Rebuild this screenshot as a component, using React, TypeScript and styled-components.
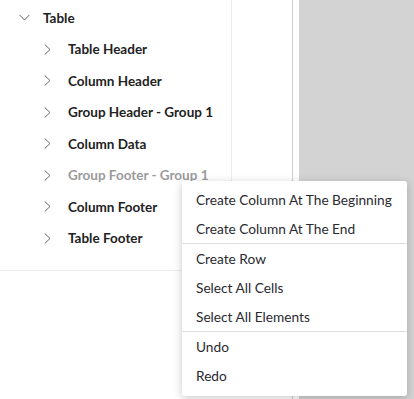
import React from "react";
import styled, { createGlobalStyle } from "styled-components";

const Global = createGlobalStyle`
  html, body { margin: 0; padding: 0; background: #fff; }
  body { font-family: "Lato", "Open Sans", sans-serif; }
  #root { width: 414px; height: 399px; overflow: hidden; }
`;

const Page = styled.div`
  display: flex;
  width: 414px;
  height: 399px;
  position: relative;
`;

const LeftPanel = styled.div`
  width: 292px;
  border-right: 1px solid #cfcfcf;
  display: flex;
  flex-direction: column;
  background: #fff;
`;

const TopArea = styled.div`
  display: flex;
  height: 270px;
  border-bottom: 1px solid #ebebeb;
`;

const TreeCol = styled.div`
  width: 231px;
  border-right: 1px solid #ececec;
  padding-top: 2px;
`;

const Gutter = styled.div`
  width: 6px;
  background: #fff;
`;

const Canvas = styled.div`
  flex: 1;
  background: #d3d3d3;
`;

const Row = styled.div<{ $level: number; $muted?: boolean }>`
  display: flex;
  align-items: center;
  height: 31.5px;
  padding-left: ${(p) => (p.$level === 0 ? 19 : 44)}px;
  font-size: 13.5px;
  font-weight: 700;
  color: ${(p) => (p.$muted ? "#9b9b9b" : "#222")};
`;

const Chevron = styled.span`
  display: inline-flex;
  width: 24px;
  align-items: center;
`;

const Menu = styled.div`
  position: absolute;
  left: 182px;
  top: 181px;
  width: 225px;
  padding: 4px 0 6px;
  background: #fff;
  border-radius: 3px;
  box-shadow: 0 2px 8px rgba(0, 0, 0, 0.22);
`;

const Item = styled.div`
  height: 29px;
  display: flex;
  align-items: center;
  padding-left: 14px;
  font-size: 13.7px;
  color: #2a2a30;
`;

const Divider = styled.div`
  height: 1px;
  background: #dddddd;
`;

const Down = () => (
  <svg width="11" height="7" viewBox="0 0 11 7" fill="none">
    <path d="M0.5 0.8 L5.5 6 L10.5 0.8" stroke="#666" strokeWidth="1" />
  </svg>
);

const Right = () => (
  <svg width="7" height="11" viewBox="0 0 7 11" fill="none">
    <path d="M0.8 0.5 L6 5.5 L0.8 10.5" stroke="#666" strokeWidth="1" />
  </svg>
);

const children: { label: string; muted?: boolean }[] = [
  { label: "Table Header" },
  { label: "Column Header" },
  { label: "Group Header - Group 1" },
  { label: "Column Data" },
  { label: "Group Footer - Group 1", muted: true },
  { label: "Column Footer" },
  { label: "Table Footer" },
];

export default function App() {
  return (
    <>
      <Global />
      <Page>
        <LeftPanel>
          <TopArea>
            <TreeCol>
              <Row $level={0}>
                <Chevron>
                  <Down />
                </Chevron>
                Table
              </Row>
              {children.map((c) => (
                <Row key={c.label} $level={1} $muted={c.muted}>
                  <Chevron>
                    <Right />
                  </Chevron>
                  {c.label}
                </Row>
              ))}
            </TreeCol>
          </TopArea>
        </LeftPanel>
        <Gutter />
        <Canvas />
        <Menu>
          <Item>Create Column At The Beginning</Item>
          <Item>Create Column At The End</Item>
          <Divider />
          <Item>Create Row</Item>
          <Item>Select All Cells</Item>
          <Item>Select All Elements</Item>
          <Divider />
          <Item>Undo</Item>
          <Item>Redo</Item>
        </Menu>
      </Page>
    </>
  );
}
